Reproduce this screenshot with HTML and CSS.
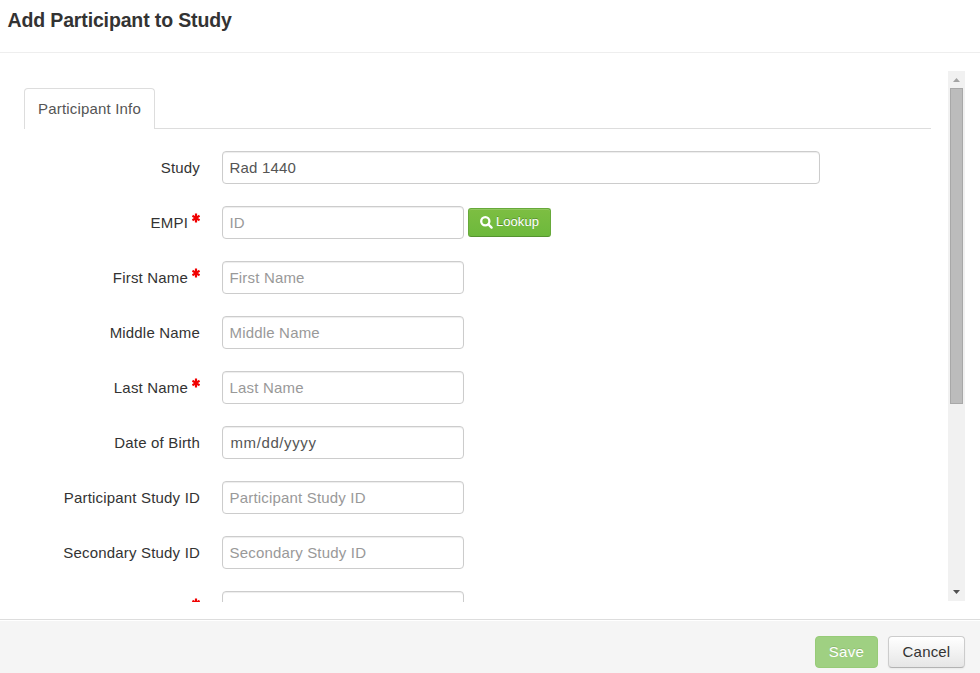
FILE: index.html
```html
<!DOCTYPE html>
<html lang="en">
<head>
<meta charset="utf-8">
<title>Add Participant to Study</title>
<link rel="stylesheet" href="styles.css">
</head>
<body>
<div class="modal">
  <header class="modal-header"><h3>Add Participant to Study</h3></header>
  <main class="modal-body">
    <div class="pane">
      <nav class="tabs"><a class="tab">Participant Info</a></nav>
      <form class="form">
        <div class="row"><label>Study</label><div class="field wide">Rad 1440</div></div>
        <div class="row"><label>EMPI<svg class="req" viewBox="0 0 8 10"><path d="M4 .5v9M.4 2.8l7.2 4.4M7.6 2.8l-7.2 4.4"/></svg></label><div class="field hint">ID</div>
          <button type="button" class="btn lookup"><svg class="search" viewBox="0 0 13 13"><circle cx="5.3" cy="5.3" r="4.1"/><path d="M8.4 8.4l3.2 3.2"/></svg><span>Lookup</span></button></div>
        <div class="row"><label>First Name<svg class="req" viewBox="0 0 8 10"><path d="M4 .5v9M.4 2.8l7.2 4.4M7.6 2.8l-7.2 4.4"/></svg></label><div class="field hint">First Name</div></div>
        <div class="row"><label>Middle Name</label><div class="field hint">Middle Name</div></div>
        <div class="row"><label>Last Name<svg class="req" viewBox="0 0 8 10"><path d="M4 .5v9M.4 2.8l7.2 4.4M7.6 2.8l-7.2 4.4"/></svg></label><div class="field hint">Last Name</div></div>
        <div class="row"><label>Date of Birth</label><div class="field date">mm/dd/yyyy</div></div>
        <div class="row"><label>Participant Study ID</label><div class="field hint">Participant Study ID</div></div>
        <div class="row"><label>Secondary Study ID</label><div class="field hint">Secondary Study ID</div></div>
        <div class="row"><label><svg class="req" viewBox="0 0 8 10"><path d="M4 .5v9M.4 2.8l7.2 4.4M7.6 2.8l-7.2 4.4"/></svg></label><div class="field"></div></div>
      </form>
    </div>
    <div class="scrollbar">
      <svg class="arrow up" viewBox="0 0 17 17"><path d="M5 11h7L8.5 7z"/></svg>
      <div class="thumb"></div>
      <svg class="arrow down" viewBox="0 0 17 17"><path d="M5 6h7L8.5 10z"/></svg>
    </div>
  </main>
  <footer class="modal-footer">
    <button type="button" class="btn save">Save</button>
    <button type="button" class="btn cancel">Cancel</button>
  </footer>
</div>
</body>
</html>
```
FILE: styles.css
```css
* { box-sizing: border-box; }
body {
  margin: 0;
  font: 15px/20px "Liberation Sans", Arial, sans-serif;
  letter-spacing: .18px;
  color: #333;
  background: #fff;
}
.modal { display: flex; flex-direction: column; height: 673px; overflow: hidden; }
.modal-header { height: 53px; flex: none; padding: 5px 7.5px; border-bottom: 1px solid #eee; }
h3 { margin: 0; font-size: 19.5px; line-height: 30px; letter-spacing: -.14px; white-space: nowrap; }
.modal-body { display: flex; height: 531px; flex: none; margin: 18px 15px 0 24px; }
.pane { width: 907px; height: 531px; overflow: hidden; margin-right: 17px; }
.tabs { display: flex; margin-top: 17px; height: 41px; border-bottom: 1px solid #ddd; }
.tab {
  width: 131px;
  height: 41px;
  padding: 10px 13px;
  border: 1px solid #ddd;
  border-bottom: 0;
  border-radius: 4px 4px 0 0;
  background: #fff;
  color: #555;
  white-space: nowrap;
}
.form { display: flex; flex-direction: column; gap: 22px; margin-top: 22px; }
.row { display: flex; height: 33px; flex: none; }
label { display: flex; justify-content: flex-end; width: 176px; margin-right: 22px; padding-top: 7px; white-space: nowrap; }
.req { width: 8px; height: 10px; margin: 0 0 0 4px; fill: none; stroke: #f00000; stroke-width: 2.2; }
.field {
  width: 242px;
  height: 33px;
  padding: 6px 7px 6px 6.5px;
  border: 1px solid #ccc;
  border-radius: 4px;
  box-shadow: inset 0 1px 1px rgba(0, 0, 0, .075);
  color: #555;
  white-space: nowrap;
}
.wide { width: 598px; }
.hint { color: #999; }
.date { padding-left: 7.5px; letter-spacing: .6px; }
.btn {
  display: flex;
  align-items: center;
  justify-content: center;
  margin: 0;
  padding: 0;
  border: 1px solid;
  border-radius: 4px;
  font: inherit;
  letter-spacing: inherit;
}
.lookup {
  width: 83px;
  height: 29px;
  margin: 2px 0 0 4px;
  padding-bottom: 1px;
  border-color: #67a93a #67a93a #559330;
  border-radius: 3px;
  background: linear-gradient(#7dbe42, #6db93c);
  box-shadow: inset 0 1px 0 rgba(255, 255, 255, .15);
  color: #fff;
  font-size: 13px;
  letter-spacing: .1px;
  text-shadow: 0 -1px 0 rgba(0, 0, 0, .25);
}
.search { width: 13px; height: 13px; margin-right: 3px; fill: none; stroke: #fff; stroke-width: 2.3; stroke-linecap: round; }
.scrollbar { display: flex; flex-direction: column; width: 17px; height: 530px; background: #f1f1f1; }
.arrow { width: 17px; height: 17px; flex: none; }
.up { fill: #a3a3a3; }
.down { margin-top: auto; fill: #505050; }
.thumb { width: 13px; height: 316px; margin: 0 2px; border: 1px solid #a8a8a8; background: #bcbcbc; }
.modal-footer {
  display: flex;
  justify-content: flex-end;
  gap: 10px;
  height: 54px;
  flex: none;
  margin-top: 17px;
  padding: 16px 15px 0;
  border-top: 1px solid #ddd;
  background: #f5f5f5;
  box-shadow: inset 0 1px 0 #fff;
}
.save {
  width: 63px;
  height: 32px;
  border-color: #97cb78;
  background: #9fd082;
  color: #fff;
  letter-spacing: .3px;
  text-shadow: 0 -1px 0 rgba(0, 0, 0, .12);
}
.cancel {
  width: 77px;
  height: 32px;
  border-color: #ccc #ccc #b3b3b3;
  background: linear-gradient(#fff, #e6e6e6);
  box-shadow: 0 1px 2px rgba(0, 0, 0, .05);
  color: #333;
}
```
